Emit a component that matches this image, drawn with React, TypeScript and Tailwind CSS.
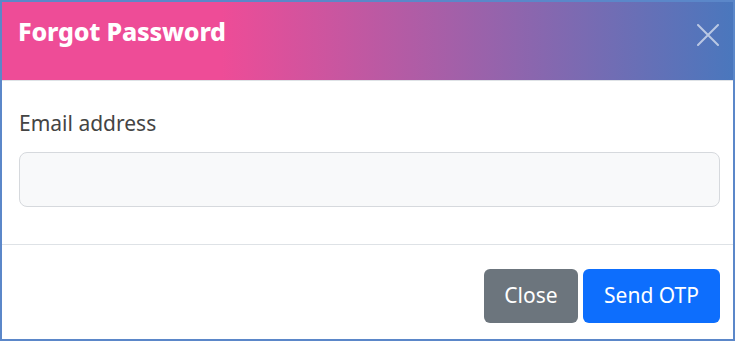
export default function App() {
  return (
    <div className="w-[735px] h-[341px] bg-white border-2 border-[#5b87c9] flex flex-col font-['Noto_Sans',sans-serif]">
      {/* Header */}
      <div className="h-[79px] flex items-start justify-between pl-[16px] pr-[14px] border-b border-[#dee2e6] bg-[linear-gradient(to_right,#ee4c97_30%,#4a77bd_100%)]">
        <h5 className="pt-[11px] text-[25px] leading-[37px] font-extrabold text-white tracking-[-0.2px]">Forgot Password</h5>
        <button className="mt-[22px] text-white/60">
          <svg width="22" height="22" viewBox="0 0 22 22" fill="none" stroke="currentColor" strokeWidth="2" strokeLinecap="round">
            <path d="M1 1L21 21M21 1L1 21" />
          </svg>
        </button>
      </div>

      {/* Body */}
      <div className="pt-[27px] pb-[37px] pl-[17px] pr-[13px]">
        <label className="block text-[21px] leading-[30px] text-[#444] mb-[14px]">Email address</label>
        <input
          type="email"
          className="block w-full h-[55px] rounded-[8px] bg-[#f8f9fa] border border-[#d6d9dd] px-3 outline-none"
        />
      </div>

      {/* Footer */}
      <div className="border-t border-[#dee2e6] pt-[24px] pr-[13px] flex justify-end gap-[5px]">
        <button className="h-[54px] w-[94px] rounded-[6px] bg-[#6c757d] text-white text-[21px]">Close</button>
        <button className="h-[54px] w-[137px] rounded-[6px] bg-[#0d6efd] text-white text-[21px]">Send OTP</button>
      </div>
    </div>
  );
}
